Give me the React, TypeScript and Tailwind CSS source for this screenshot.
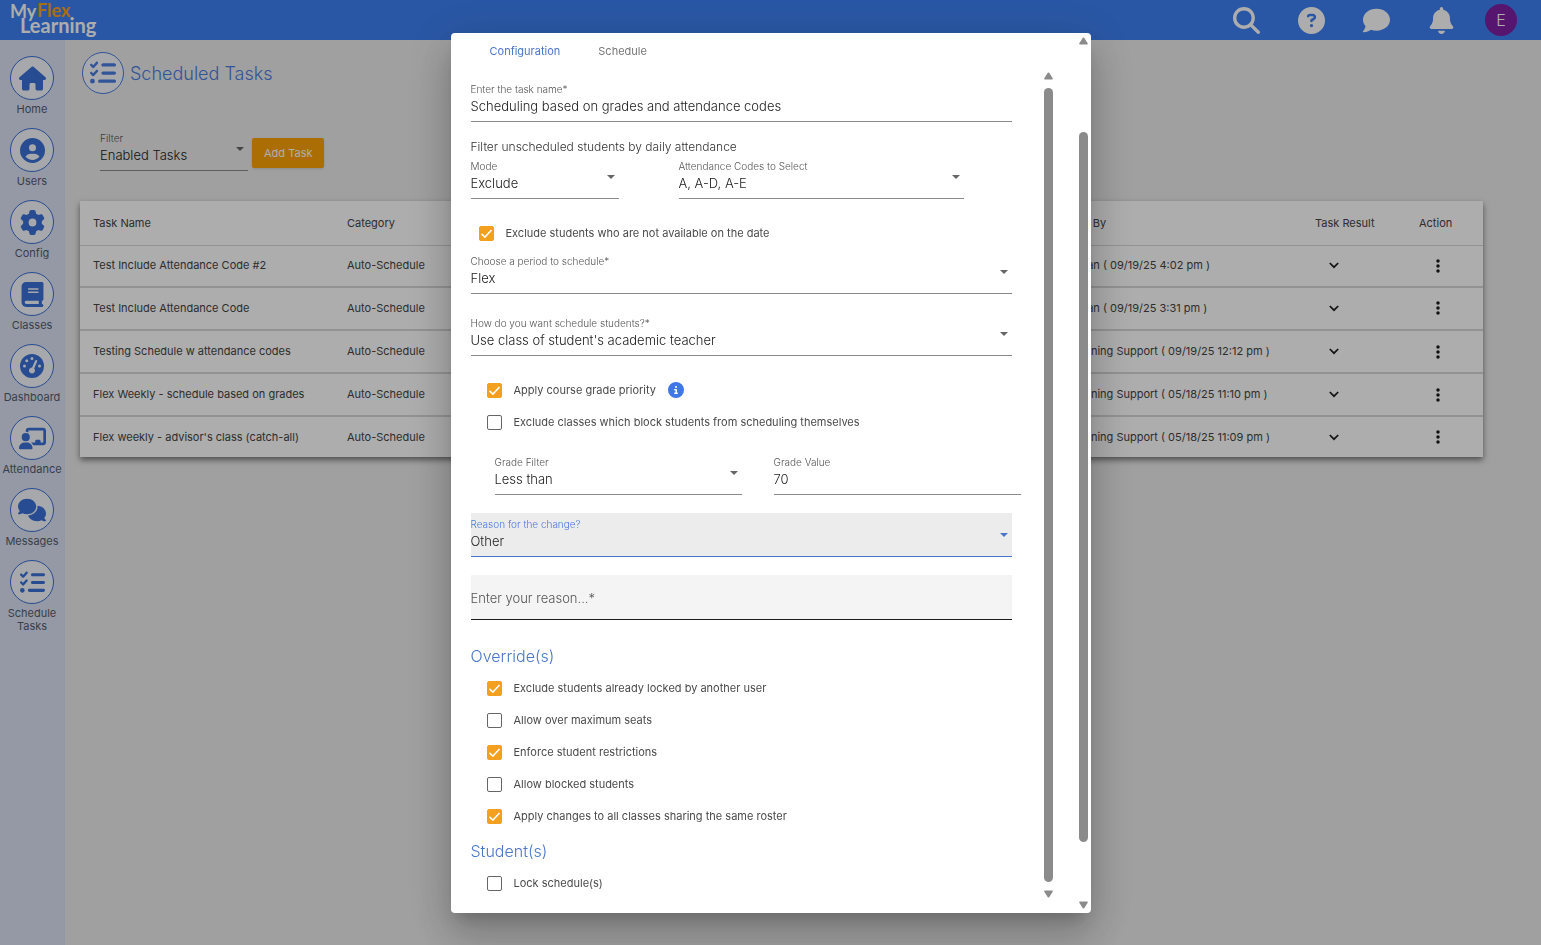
import { useState } from 'react';
import type { ReactNode } from 'react';
import {
    FaBell,
    FaBook,
    FaChalkboardUser,
    FaCircleInfo,
    FaCircleQuestion,
    FaCircleUser,
    FaComment,
    FaComments,
    FaEllipsisVertical,
    FaGaugeHigh,
    FaGear,
    FaHouse,
    FaListCheck,
    FaMagnifyingGlass,
} from 'react-icons/fa6';

const navItems = [
    { label: 'Home', icon: <FaHouse size={27} /> },
    { label: 'Users', icon: <FaCircleUser size={25} /> },
    { label: 'Config', icon: <FaGear size={25} /> },
    { label: 'Classes', icon: <FaBook size={25} /> },
    { label: 'Dashboard', icon: <FaGaugeHigh size={24} /> },
    { label: 'Attendance', icon: <FaChalkboardUser size={27} /> },
    { label: 'Messages', icon: <FaComments size={28} /> },
    { label: 'Schedule Tasks', icon: <FaListCheck size={25} /> },
];

const tasks = [
    { name: 'Test Include Attendance Code #2', category: 'Auto-Schedule', updated: 'Evan Wellman ( 09/19/25 4:02 pm )' },
    { name: 'Test Include Attendance Code', category: 'Auto-Schedule', updated: 'Evan Wellman ( 09/19/25 3:31 pm )' },
    { name: 'Testing Schedule w attendance codes', category: 'Auto-Schedule', updated: 'MyFlex Learning Support ( 09/19/25 12:12 pm )' },
    { name: 'Flex Weekly - schedule based on grades', category: 'Auto-Schedule', updated: 'MyFlex Learning Support ( 05/18/25 11:10 pm )' },
    { name: "Flex weekly - advisor's class (catch-all)", category: 'Auto-Schedule', updated: 'MyFlex Learning Support ( 05/18/25 11:09 pm )' },
];

const overrides = [
    { id: 'locked', label: 'Exclude students already locked by another user', checked: true },
    { id: 'seats', label: 'Allow over maximum seats', checked: false },
    { id: 'restrictions', label: 'Enforce student restrictions', checked: true },
    { id: 'blocked', label: 'Allow blocked students', checked: false },
    { id: 'roster', label: 'Apply changes to all classes sharing the same roster', checked: true },
];

function Logo() {
    return (
        <svg width="90" height="38" viewBox="0 0 90 38" fontFamily="Lato, sans-serif" fontWeight="700" aria-label="MyFlex Learning">
            <text x="0" y="17" fontSize="18" fill="#fff">My</text>
            <text x="27" y="16" fontSize="18" fill="#f9a11b">Flex</text>
            <text x="10" y="32" fontSize="20" fill="#fff">Learning</text>
        </svg>
    );
}

type FieldProps = {
    id: string;
    label: string;
    value: string;
    type?: 'select' | 'text';
    active?: boolean;
    className?: string;
};

function Field({ id, label, value, type = 'select', active = false, className = '' }: FieldProps) {
    return (
        <div
            className={`relative flex h-11 flex-col border-b pt-[3px] ${active ? 'border-[#4a76c9] bg-[#ececec]' : 'border-[#8a8a8a]'} ${className}`}
        >
            <label htmlFor={id} className={`text-[10px] leading-4 font-light ${active ? 'text-[#4a76dc]' : 'text-[#555]'}`}>
                {label}
            </label>
            {type === 'select' ? (
                <>
                    <select
                        id={id}
                        defaultValue={value}
                        className="h-[18px] w-full appearance-none bg-transparent text-[13px] leading-[18px] font-light text-[#222] outline-none"
                    >
                        <option>{value}</option>
                    </select>
                    <svg
                        className={`pointer-events-none absolute top-5 right-1 ${active ? 'text-[#4a76c9]' : 'text-[#666]'}`}
                        width="8"
                        height="4"
                        viewBox="0 0 8 4"
                        fill="currentColor"
                    >
                        <path d="M0 0h8L4 4z" />
                    </svg>
                </>
            ) : (
                <input
                    id={id}
                    type="text"
                    defaultValue={value}
                    className="h-[18px] w-full bg-transparent text-[13px] leading-[18px] font-light text-[#222] outline-none"
                />
            )}
        </div>
    );
}

type CheckProps = {
    id: string;
    label: string;
    checked: boolean;
    className?: string;
    children?: ReactNode;
};

function Check({ id, label, checked, className = 'pl-4', children }: CheckProps) {
    const [on, setOn] = useState(checked);

    return (
        <div className={`flex h-8 items-center ${className}`}>
            <span className="relative flex">
                <input
                    id={id}
                    type="checkbox"
                    checked={on}
                    onChange={() => setOn(!on)}
                    className="size-[15px] appearance-none rounded-xs border border-[#666] bg-white checked:border-[#f2a01e] checked:bg-[#f2a01e]"
                />
                {on && (
                    <svg className="pointer-events-none absolute inset-0" width="15" height="15" viewBox="0 0 15 15" fill="none" stroke="#fff" strokeWidth="1.6">
                        <path d="M2.5 7.8l3.4 3.2 6.6-7" />
                    </svg>
                )}
            </span>
            <label htmlFor={id} className="ml-3 text-[11px] leading-4 text-[#4a4a4a]">
                {label}
            </label>
            {children}
        </div>
    );
}

function ScrollBar({ thumb }: { thumb: string }) {
    return (
        <div className="flex w-[15px] shrink-0 flex-col items-center text-[#8b8b8b]" aria-hidden="true">
            <svg width="9" height="8" viewBox="0 0 9 8" fill="currentColor">
                <path d="M4.5 0.5Q5.2 0.5 5.7 1.4L8.8 6.4Q9 7.5 8 7.5H1Q0 7.5 .2 6.4L3.3 1.4Q3.8.5 4.5.5z" />
            </svg>
            <div className="flex w-[9px] flex-1 flex-col">
                <div className={`w-full rounded-full bg-[#8b8b8b] ${thumb}`} />
            </div>
            <svg width="9" height="8" viewBox="0 0 9 8" fill="currentColor">
                <path d="M4.5 7.5Q5.2 7.5 5.7 6.6L8.8 1.6Q9 .5 8 .5H1Q0 .5 .2 1.6L3.3 6.6Q3.8 7.5 4.5 7.5z" />
            </svg>
        </div>
    );
}

function TaskDialog() {
    const [tab, setTab] = useState('Configuration');

    return (
        <div className="fixed inset-0 flex items-center justify-center bg-black/32 pt-[33px] pb-8">
            <div
                role="dialog"
                aria-label="Scheduled task"
                className="flex h-full w-full max-w-[640px] overflow-hidden rounded-sm bg-white shadow-[0_11px_15px_-7px_rgba(0,0,0,0.2),0_24px_38px_3px_rgba(0,0,0,0.14),0_9px_46px_8px_rgba(0,0,0,0.12)]"
            >
                <div className="flex min-w-0 flex-1 flex-col pr-5 pb-3 pl-5">
                    <div className="flex h-9 shrink-0 items-center">
                        {['Configuration', 'Schedule'].map((name) => (
                            <button
                                key={name}
                                onClick={() => setTab(name)}
                                className={`px-[19px] text-[11px] leading-4 ${tab === name ? 'text-[#4a76c9]' : 'text-[#777]'}`}
                            >
                                {name}
                            </button>
                        ))}
                    </div>

                    <div className="flex min-h-0 flex-1">
                        <form className="min-w-0 flex-1 overflow-hidden pt-[9px]">
                            <div className="mr-[29px]">
                                <Field id="name" type="text" label="Enter the task name*" value="Scheduling based on grades and attendance codes" />
                                <p className="mt-4 text-[12px] leading-[17px] font-light text-[#333]">Filter unscheduled students by daily attendance</p>
                                <div className="flex gap-[60px]">
                                    <Field id="mode" label="Mode" value="Exclude" className="w-[148px]" />
                                    <Field id="codes" label="Attendance Codes to Select" value="A, A-D, A-E" className="w-[285px]" />
                                </div>
                                <Check id="available" label="Exclude students who are not available on the date" checked className="my-[18px] mb-px pl-2" />
                                <Field id="period" label="Choose a period to schedule*" value="Flex" />
                                <Field id="how" label="How do you want schedule students?*" value="Use class of student's academic teacher" className="mt-[18px]" />
                            </div>

                            <div className="mt-[18px]">
                                <Check id="priority" label="Apply course grade priority" checked>
                                    <FaCircleInfo size={16} className="ml-3 text-[#3f78e6]" />
                                </Check>
                                <Check id="block" label="Exclude classes which block students from scheduling themselves" checked={false} />
                            </div>

                            <div className="mt-[13px] mr-5 ml-6 flex gap-8">
                                <Field id="gradeFilter" label="Grade Filter" value="Less than" className="flex-1" />
                                <Field id="gradeValue" type="text" label="Grade Value" value="70" className="flex-1" />
                            </div>

                            <div className="mr-[29px]">
                                <Field id="reason" label="Reason for the change?" value="Other" active className="mt-[18px]" />
                                <input
                                    type="text"
                                    aria-label="Enter your reason"
                                    placeholder="Enter your reason...*"
                                    className="mt-[18px] block h-[45px] w-full border-b border-[#1c1c1c] bg-[#f4f4f4] pt-0.5 text-[13px] font-light text-[#222] outline-none placeholder:text-[#555]"
                                />
                            </div>

                            <h2 className="mt-5 text-[16px] leading-8 font-light text-[#4a76c9]">Override(s)</h2>
                            {overrides.map((item) => (
                                <Check key={item.id} id={item.id} label={item.label} checked={item.checked} />
                            ))}

                            <h2 className="mt-[3px] text-[16px] leading-8 font-light text-[#4a76c9]">Student(s)</h2>
                            <Check id="lock" label="Lock schedule(s)" checked={false} />
                        </form>
                        <div className="flex py-[3px]">
                            <ScrollBar thumb="my-2 flex-1" />
                        </div>
                    </div>
                </div>
                <div className="flex py-1">
                    <ScrollBar thumb="mt-[87px] h-[83%]" />
                </div>
            </div>
        </div>
    );
}

export default function App() {
    return (
        <div className="flex min-h-screen flex-col bg-[#ececec] font-['Inter',sans-serif]">
            {/* TOP BAR */}
            <header className="flex h-10 items-center justify-between bg-[#3e80f3] pr-6 pl-[10px]">
                <Logo />
                <div className="flex items-center gap-[30px]">
                    <div className="flex items-center gap-[38px] text-white">
                        <button aria-label="Search"><FaMagnifyingGlass size={27} /></button>
                        <button aria-label="Help"><FaCircleQuestion size={27} /></button>
                        <button aria-label="Chat"><FaComment size={27} /></button>
                        <button aria-label="Notifications"><FaBell size={27} /></button>
                    </div>
                    <button className="size-8 rounded-full bg-[#7f1fa3] text-[16px] font-light text-white">E</button>
                </div>
            </header>

            <div className="flex flex-1">
                {/* SIDEBAR */}
                <nav className="w-[65px] shrink-0 border-r border-[#d3e0f3] bg-[#dbe2f3] pt-4">
                    {navItems.map((item) => (
                        <a key={item.label} href="#" className="mb-3 flex flex-col items-center gap-[3px]">
                            <span className="flex size-11 items-center justify-center rounded-full border border-[#3a70d6] bg-[#f6f8fd] text-[#3a70d6]">
                                {item.icon}
                            </span>
                            <span className="text-center text-[11px] leading-[13px] text-[#555c6e]">{item.label}</span>
                        </a>
                    ))}
                </nav>

                {/* TASK LIST */}
                <main className="min-w-0 flex-1 pr-[58px] pl-[15px]">
                    <div className="mt-3 ml-[2px] flex items-center gap-[6px] text-[#4a7ce0]">
                        <span className="flex size-[42px] items-center justify-center rounded-full border border-[#4a7ce0] bg-[#f6f8fd]">
                            <FaListCheck size={26} />
                        </span>
                        <h1 className="text-[18px] font-light">Scheduled Tasks</h1>
                    </div>

                    <div className="mt-[33px] ml-5 flex items-center gap-1">
                        <Field id="filter" label="Filter" value="Enabled Tasks" className="w-[148px]" />
                        <button className="mt-2 h-[30px] rounded-xs bg-[#fba206] px-3 text-[11px] text-white shadow">Add Task</button>
                    </div>

                    <table className="mt-[30px] h-64 w-full table-fixed bg-white text-left text-[11px] text-[#444] shadow-[0_3px_6px_rgba(0,0,0,0.5)]">
                        <colgroup>
                            <col className="w-[254px]" />
                            <col />
                            <col className="w-[288px]" />
                            <col className="w-[104px]" />
                            <col className="w-[77px]" />
                        </colgroup>
                        <thead>
                            <tr className="h-11 border-b border-[#d8d8d8]">
                                <th className="pl-[13px] font-normal">Task Name</th>
                                <th className="pl-[13px] font-normal">Category</th>
                                <th className="pl-[13px] font-normal">Last Update By</th>
                                <th className="pl-[13px] font-normal">Task Result</th>
                                <th className="pl-[13px] font-normal">Action</th>
                            </tr>
                        </thead>
                        <tbody>
                            {tasks.map((task) => (
                                <tr key={task.name} className="border-b-2 border-[#d8d8d8] last:border-b-0">
                                    <td className="pl-[13px] whitespace-nowrap">{task.name}</td>
                                    <td className="pl-[13px]">{task.category}</td>
                                    <td className="pl-[13px] whitespace-nowrap">{task.updated}</td>
                                    <td className="pl-[13px]">
                                        <button aria-label="Show result" className="flex w-[38px] justify-center text-[#1c1c1c]">
                                            <svg width="10" height="7" viewBox="0 0 10 7" fill="none" stroke="currentColor" strokeWidth="1.7">
                                                <path d="M.8 1L5 5.2 9.2 1" />
                                            </svg>
                                        </button>
                                    </td>
                                    <td className="pl-[13px]">
                                        <button aria-label="Actions" className="flex w-[38px] justify-center text-[#1c1c1c]">
                                            <FaEllipsisVertical size={16} />
                                        </button>
                                    </td>
                                </tr>
                            ))}
                        </tbody>
                    </table>
                </main>
            </div>

            <TaskDialog />
        </div>
    );
}
